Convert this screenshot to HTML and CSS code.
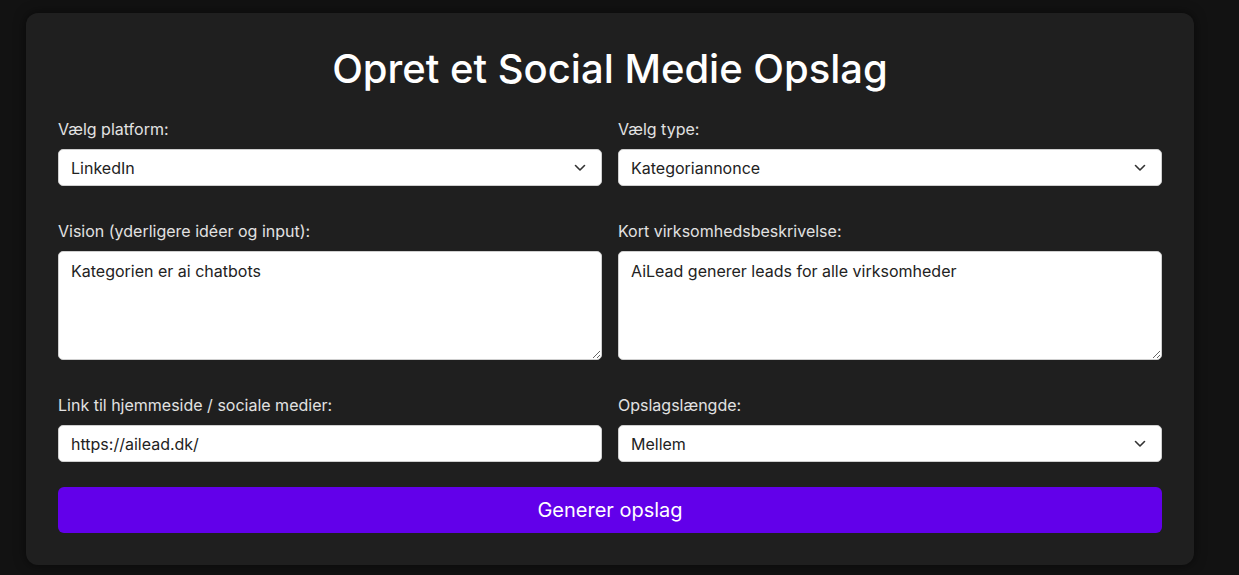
FILE: index.html
```html
<!DOCTYPE html>
<html lang="da">
<head>
<meta charset="utf-8">
<title>Opret et Social Medie Opslag</title>
<link rel="stylesheet" href="styles.css">
</head>
<body>
<div class="card">
  <h1 class="title">Opret et Social Medie Opslag</h1>
  <form class="grid">
    <div class="field">
      <label class="label" for="platform">Vælg platform:</label>
      <div class="select-wrap">
        <select id="platform" class="control select">
          <option>LinkedIn</option>
        </select>
        <svg class="chev" width="12" height="8" viewBox="0 0 12 8"><path d="M1.5 1.5 L6 6 L10.5 1.5" fill="none" stroke="#333" stroke-width="1.6" stroke-linecap="round" stroke-linejoin="round"/></svg>
      </div>
    </div>
    <div class="field">
      <label class="label" for="type">Vælg type:</label>
      <div class="select-wrap">
        <select id="type" class="control select">
          <option>Kategoriannonce</option>
        </select>
        <svg class="chev" width="12" height="8" viewBox="0 0 12 8"><path d="M1.5 1.5 L6 6 L10.5 1.5" fill="none" stroke="#333" stroke-width="1.6" stroke-linecap="round" stroke-linejoin="round"/></svg>
      </div>
    </div>
    <div class="field">
      <label class="label" for="vision">Vision (yderligere idéer og input):</label>
      <textarea id="vision" class="control area">Kategorien er ai chatbots</textarea>
    </div>
    <div class="field">
      <label class="label" for="desc">Kort virksomhedsbeskrivelse:</label>
      <textarea id="desc" class="control area">AiLead generer leads for alle virksomheder</textarea>
    </div>
    <div class="field">
      <label class="label" for="link">Link til hjemmeside / sociale medier:</label>
      <input id="link" class="control" type="text" value="https://ailead.dk/">
    </div>
    <div class="field">
      <label class="label" for="len">Opslagslængde:</label>
      <div class="select-wrap">
        <select id="len" class="control select">
          <option>Mellem</option>
        </select>
        <svg class="chev" width="12" height="8" viewBox="0 0 12 8"><path d="M1.5 1.5 L6 6 L10.5 1.5" fill="none" stroke="#333" stroke-width="1.6" stroke-linecap="round" stroke-linejoin="round"/></svg>
      </div>
    </div>
    <button type="button" class="btn">Generer opslag</button>
  </form>
</div>
</body>
</html>
```

FILE: styles.css
```css
* { box-sizing: border-box; }
html, body { height: 100%; }
body {
  margin: 0;
  background: #121212;
  font-family: Inter, "Noto Sans", sans-serif;
  color: #e6e6e6;
}
.card {
  margin: 13px 0 0 26px;
  width: 1168px;
  background: #1f1f1f;
  border-radius: 12px;
  padding: 30px 32px 32px;
  box-shadow: 0 0 12px rgba(0,0,0,0.55);
}
.title {
  margin: 0 0 24px;
  text-align: center;
  font-size: 40px;
  font-weight: 500;
  line-height: 52px;
  color: #ffffff;
}
.grid {
  display: grid;
  grid-template-columns: 1fr 1fr;
  column-gap: 16px;
  row-gap: 35px;
}
.field {
  display: flex;
  flex-direction: column;
}
.label {
  font-size: 16px;
  line-height: 20px;
  color: #e2e2e2;
  margin-bottom: 10px;
}
.control {
  width: 100%;
  font-family: Inter, "Noto Sans", sans-serif;
  font-size: 16px;
  color: #222;
  background: #fff;
  border: 1px solid #cfcfcf;
  border-radius: 5px;
  padding: 0 12px;
  height: 37px;
  outline: none;
}
.select-wrap { position: relative; }
.select {
  appearance: none;
  -webkit-appearance: none;
}
.chev {
  position: absolute;
  right: 16px;
  top: 15px;
  pointer-events: none;
}
.area {
  height: 109px;
  padding: 9px 12px;
  line-height: 20px;
  resize: vertical;
}
.btn {
  grid-column: 1 / -1;
  margin-top: -10px;
  height: 46px;
  border: none;
  border-radius: 6px;
  background: #6200ea;
  color: #fff;
  font-family: Inter, "Noto Sans", sans-serif;
  font-size: 20px;
  font-weight: 400;
}
```
